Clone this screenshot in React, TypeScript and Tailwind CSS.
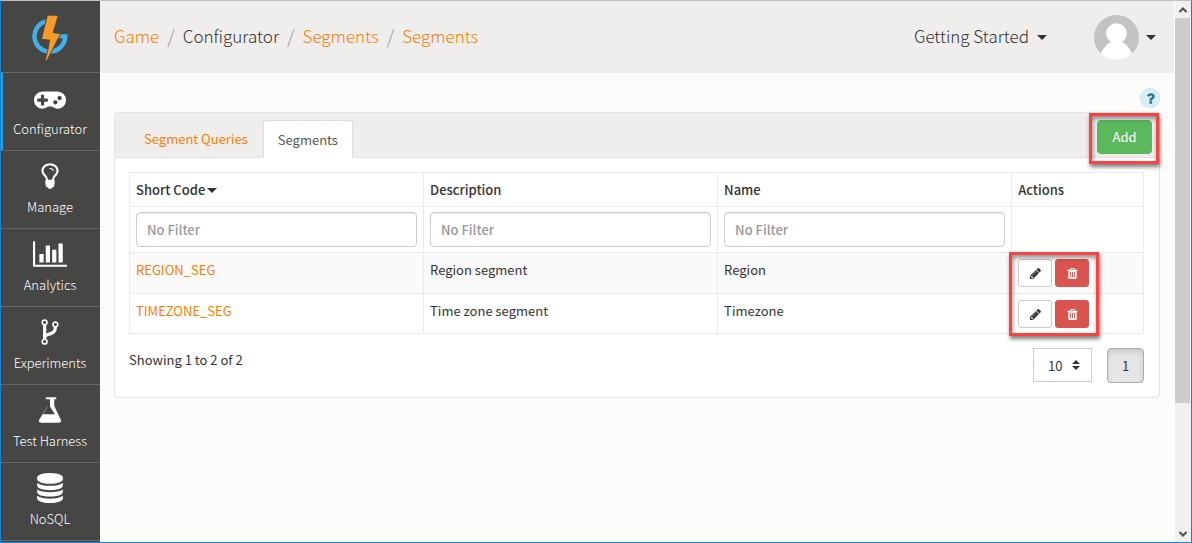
import React from "react";

type Glyph = { box: string; d: string };

const glyphs: Record<string, Glyph> = {
  gamepad: {
    box: "0 0 1920 1792",
    d: "M832 1088v-128q0-14-9-23t-23-9h-192v-192q0-14-9-23t-23-9h-128q-14 0-23 9t-9 23v192h-192q-14 0-23 9t-9 23v128q0 14 9 23t23 9h192v192q0 14 9 23t23 9h128q14 0 23-9t9-23v-192h192q14 0 23-9t9-23zm576 64q0-53-37.5-90.5t-90.5-37.5-90.5 37.5-37.5 90.5 37.5 90.5 90.5 37.5 90.5-37.5 37.5-90.5zm256-256q0-53-37.5-90.5t-90.5-37.5-90.5 37.5-37.5 90.5 37.5 90.5 90.5 37.5 90.5-37.5 37.5-90.5zm256 128q0 212-150 362t-362 150q-192 0-338-128h-220q-146 128-338 128-212 0-362-150t-150-362 150-362 362-150h896q212 0 362 150t150 362z",
  },
  bulb: {
    box: "0 0 1792 1792",
    d: "M1120 576q0 13-9.5 22.5t-22.5 9.5-22.5-9.5-9.5-22.5q0-46-54-71t-106-25q-13 0-22.5-9.5t-9.5-22.5 9.5-22.5 22.5-9.5q50 0 99.5 16t87 54 37.5 90zm160 0q0-72-34.5-134t-90-101.5-123-62-136.5-22.5-136.5 22.5-123 62-90 101.5-34.5 134q0 101 68 180 10 11 30.5 33t30.5 33q128 153 141 298h228q13-145 141-298 10-11 30.5-33t30.5-33q68-79 68-180zm128 0q0 155-103 268-45 49-74.5 87t-59.5 95.5-34 107.5q47 28 47 82 0 37-25 64 25 27 25 64 0 52-45 81 13 23 13 47 0 46-31.5 71t-77.5 25q-20 44-60 70t-87 26-87-26-60-70q-46 0-77.5-25t-31.5-71q0-24 13-47-45-29-45-81 0-37 25-64-25-27-25-64 0-54 47-82-4-50-34-107.5t-59.5-95.5-74.5-87q-103-113-103-268 0-99 44.5-184.5t117-142 164-89 186.5-32.5 186.5 32.5 164 89 117 142 44.5 184.5z",
  },
  chart: {
    box: "0 0 2048 1792",
    d: "M640 896v512h-256v-512h256zm384-512v1024h-256v-1024h256zm1024 1152v128h-2048v-1536h128v1408h1920zm-640-896v768h-256v-768h256zm384-384v1152h-256v-1152h256z",
  },
  fork: {
    box: "0 0 1792 1792",
    d: "M672 1472q0-40-28-68t-68-28-68 28-28 68 28 68 68 28 68-28 28-68zm0-1152q0-40-28-68t-68-28-68 28-28 68 28 68 68 28 68-28 28-68zm640 128q0-40-28-68t-68-28-68 28-28 68 28 68 68 28 68-28 28-68zm96 0q0 52-26 96.5t-70 69.5q-2 287-226 414-67 38-203 81-128 40-169.5 71t-41.5 100v26q44 25 70 69.5t26 96.5q0 80-56 136t-136 56-136-56-56-136q0-52 26-96.5t70-69.5v-820q-44-25-70-69.5t-26-96.5q0-80 56-136t136-56 136 56 56 136q0 52-26 96.5t-70 69.5v497q54-26 154-57 55-17 87.5-29.5t70.5-31 59-39.5 40.5-51 28-69.5 8.5-91.5q-44-25-70-69.5t-26-96.5q0-80 56-136t136-56 136 56 56 136z",
  },
  flask: {
    box: "0 0 1792 1792",
    d: "M1527 1448q56 89 21.5 152.5t-140.5 63.5h-1024q-106 0-140.5-63.5t21.5-152.5l503-793v-399h-64q-26 0-45-19t-19-45 19-45 45-19h512q26 0 45 19t19 45-19 45-45 19h-64v399zm-779-725l-272 429h712l-272-429-20-31v-436h-128v436z",
  },
  database: {
    box: "0 0 1792 1792",
    d: "M896 768q237 0 443-43t325-127v170q0 69-103 128t-280 93.5-385 34.5-385-34.5-280-93.5-103-128v-170q119 84 325 127t443 43zm0 768q237 0 443-43t325-127v170q0 69-103 128t-280 93.5-385 34.5-385-34.5-280-93.5-103-128v-170q119 84 325 127t443 43zm0-384q237 0 443-43t325-127v170q0 69-103 128t-280 93.5-385 34.5-385-34.5-280-93.5-103-128v-170q119 84 325 127t443 43zm0-1152q208 0 385 34.5t280 93.5 103 128v128q0 69-103 128t-280 93.5-385 34.5-385-34.5-280-93.5-103-128v-128q0-69 103-128t280-93.5 385-34.5z",
  },
  pencil: {
    box: "0 0 1792 1792",
    d: "M491 1536l91-91-235-235-91 91v107h128v128h107zm523-928q0-22-22-22-10 0-17 7l-542 542q-7 7-7 17 0 22 22 22 10 0 17-7l542-542q7-7 7-17zm-54-192l416 416-832 832h-416v-416zm683 96q0 53-37 90l-166 166-416-416 166-165q36-38 90-38 53 0 91 38l235 234q37 39 37 91z",
  },
  trash: {
    box: "0 0 1792 1792",
    d: "M704 1376v-704q0-14-9-23t-23-9h-64q-14 0-23 9t-9 23v704q0 14 9 23t23 9h64q14 0 23-9t9-23zm256 0v-704q0-14-9-23t-23-9h-64q-14 0-23 9t-9 23v704q0 14 9 23t23 9h64q14 0 23-9t9-23zm256 0v-704q0-14-9-23t-23-9h-64q-14 0-23 9t-9 23v704q0 14 9 23t23 9h64q14 0 23-9t9-23zm-544-992h448l-48-117q-7-9-17-11h-317q-10 2-17 11zm928 32v64q0 14-9 23t-23 9h-96v948q0 83-47 143.5t-113 60.5h-832q-66 0-113-58.5t-47-141.5v-952h-96q-14 0-23-9t-9-23v-64q0-14 9-23t23-9h309l70-167q15-37 54-63t79-26h320q40 0 79 26t54 63l70 167h309q14 0 23 9t9 23z",
  },
  question: {
    box: "0 0 1792 1792",
    d: "M1088 1256v240q0 16-12 28t-28 12h-240q-16 0-28-12t-12-28v-240q0-16 12-28t28-12h240q16 0 28 12t12 28zm316-600q0 54-15.5 101t-35 76.5-55 59.5-57.5 43.5-61 35.5q-41 23-68.5 65t-27.5 67q0 17-12 32.5t-28 15.5h-240q-15 0-25.5-18.5t-10.5-37.5v-45q0-83 65-156.5t143-108.5q59-27 84-56t25-76q0-42-46.5-74t-107.5-32q-65 0-108 29-35 25-107 115-13 16-31 16-12 0-25-8l-164-125q-13-10-15.5-25t5.5-28q160-266 464-266 80 0 161 31t146 83 106 127.5 41 158.5z",
  },
};

function Icon({ name, className }: { name: string; className: string }) {
  const g = glyphs[name];
  return (
    <svg viewBox={g.box} className={className} fill="currentColor" aria-hidden="true">
      <path d={g.d} />
    </svg>
  );
}

function Caret() {
  return (
    <svg viewBox="0 0 10 5" className="h-[5px] w-[10px]" fill="currentColor" aria-hidden="true">
      <path d="M0 0h10L5 5z" />
    </svg>
  );
}

function Logo() {
  return (
    <svg viewBox="21 21 111 138" className="h-[46px] w-[37px]" aria-hidden="true">
      <path d="M62 40.500A46 46 0 1 0 120.500 85" fill="none" stroke="#40b0e8" strokeWidth="13.500" />
      <path d="M107 79h20v12h-26z" fill="#40b0e8" />
      <path
        d="M68 23h30L83 75l22 3L65 157l-3-1 8-31 5-30-24-3z"
        fill="#f79a2c"
        stroke="#464644"
        strokeWidth="5"
        paintOrder="stroke"
      />
    </svg>
  );
}

const nav = [
  { label: "Configurator", icon: "gamepad", size: "h-[30px] w-8" },
  { label: "Manage", icon: "bulb", size: "size-[30px]" },
  { label: "Analytics", icon: "chart", size: "h-[30px] w-[34px]" },
  { label: "Experiments", icon: "fork", size: "size-[30px]" },
  { label: "Test Harness", icon: "flask", size: "size-[30px]" },
  { label: "NoSQL", icon: "database", size: "size-[30px]" },
];

const rows = [
  { code: "REGION_SEG", description: "Region segment", name: "Region" },
  { code: "TIMEZONE_SEG", description: "Time zone segment", name: "Timezone" },
];

const filters = ["Short Code", "Description", "Name"];

function Highlight({ className }: { className: string }) {
  return (
    <span
      aria-hidden="true"
      className={`pointer-events-none absolute z-10 border-3 border-[#fb4343] shadow-[1px_3px_4px_rgba(0,0,0,0.5),inset_1px_3px_4px_rgba(0,0,0,0.4)] ${className}`}
    />
  );
}

function Sidebar() {
  return (
    <nav className="flex w-[99px] shrink-0 flex-col overflow-hidden bg-[#464644]">
      <a href="#home" aria-label="Home" className="flex h-[71px] shrink-0 items-center justify-center pt-[3px]">
        <Logo />
      </a>
      {nav.map((item, i) => (
        <a
          key={item.label}
          href={"#" + item.label}
          className={`flex h-[78px] shrink-0 flex-col items-center gap-[5px] border-t border-[#666664] pt-[10px] text-white ${
            i === 0 ? "border-l-2 border-l-[#1fa4e8] pr-[3px]" : "pr-px"
          }`}
        >
          <Icon name={item.icon} className={item.size} />
          <span className="text-[13px] leading-[22px] font-light">{item.label}</span>
        </a>
      ))}
      <div className="h-[78px] shrink-0 border-t border-[#666664]" />
    </nav>
  );
}

function Slash() {
  return (
    <li aria-hidden="true" className="text-[19px] text-[#999]">
      /
    </li>
  );
}

function TopBar() {
  return (
    <header className="flex h-[72px] shrink-0 items-center justify-between bg-[#f0eeed] pr-[18px] pl-[14px] text-[17px] leading-6 font-light">
      <nav aria-label="Breadcrumb" className="pb-[2px]">
        <ol className="flex gap-2">
          <li><a href="#game" className="text-[#ff7c00]">Game</a></li>
          <Slash />
          <li>Configurator</li>
          <Slash />
          <li><a href="#segment" className="text-[#ff7c00]">Segments</a></li>
          <Slash />
          <li><a href="#segments" className="text-[#ff7c00]">Segments</a></li>
        </ol>
      </nav>
      <div className="flex items-center gap-[47px]">
        <button type="button" className="flex items-center gap-2">
          <span className="pb-[2px]">Getting Started</span>
          <Caret />
        </button>
        <button type="button" aria-label="Account" className="flex items-center gap-[7px]">
          <svg viewBox="0 0 45 45" className="size-[45px] rounded-full" aria-hidden="true">
            <path d="M0 0h45v45H0z" fill="#c3c3c3" />
            <circle cx="22.5" cy="18.500" r="10.3" fill="#fff" />
            <path d="M6 40Q12 27 19 26.500h7Q33 27 39 40L36 45H9z" fill="#fff" />
          </svg>
          <Caret />
        </button>
      </div>
    </header>
  );
}

function SegmentsTable() {
  const line = "border border-[#ebebeb] px-[6px] text-left align-top";
  const head = `${line} pt-[6px] pb-[5px] font-medium`;
  return (
    <table className="w-full table-fixed border-collapse">
      <colgroup>
        <col className="w-[29%]" />
        <col className="w-[29%]" />
        <col className="w-[29%]" />
        <col />
      </colgroup>
      <thead>
        <tr>
          <th scope="col" className={head}>
            <button type="button" className="flex items-center gap-[2px]">
              Short Code
              <Caret />
            </button>
          </th>
          <th scope="col" className={head}>Description</th>
          <th scope="col" className={head}>Name</th>
          <th scope="col" className={head}>Actions</th>
        </tr>
        <tr>
          {filters.map((f) => (
            <td key={f} className={`${line} py-[5px]`}>
              <input
                type="text"
                aria-label={"Filter by " + f}
                placeholder="No Filter"
                className="block h-[35px] w-full rounded-[4px] border border-[#ccc] bg-white px-[10px] font-medium shadow-[inset_0_1px_1px_rgba(0,0,0,0.075)] placeholder:text-[#999]"
              />
            </td>
          ))}
          <td className={line} />
        </tr>
      </thead>
      <tbody>
        {rows.map((r, i) => {
          const cell = `${line} pt-[6px] ${i === rows.length - 1 ? "pb-[5px]" : "pb-[6px]"}`;
          return (
            <tr key={r.code} className="odd:bg-[#fafafa]">
              <td className={cell}><a href={"#" + r.code} className="text-[#ff7c00]">{r.code}</a></td>
              <td className={cell}>{r.description}</td>
              <td className={cell}>{r.name}</td>
              <td className={cell}>
                <div className="relative flex gap-[3px]">
                  <button type="button" aria-label={"Edit " + r.code} className="flex h-7 w-[34px] items-center justify-center rounded-[3px] border border-[#ccc] bg-white">
                    <Icon name="pencil" className="size-[13px]" />
                  </button>
                  <button type="button" aria-label={"Delete " + r.code} className="flex h-7 w-[34px] items-center justify-center rounded-[3px] border border-[#d9534f] bg-[#d9534f] text-white">
                    <Icon name="trash" className="size-[13px]" />
                  </button>
                  {i === 0 && <Highlight className="-top-[7px] -left-[9px] h-[84px] w-[90px]" />}
                </div>
              </td>
            </tr>
          );
        })}
      </tbody>
    </table>
  );
}

function Panel() {
  return (
    <section className="rounded-[4px] border border-[#e4e4e2] bg-white">
      <div className="flex h-[45px] items-start justify-between border-b border-[#e0e0de] bg-[#f0eeed] pt-[7px] pr-[7px] pl-[14px]">
        <div role="tablist" className="flex">
          <button type="button" role="tab" aria-selected="false" className="h-[38px] px-[15px] text-[#ff7c00]">
            Segment Queries
          </button>
          <button type="button" role="tab" aria-selected="true" className="h-[38px] rounded-t-[4px] border border-b-0 border-[#ddd] bg-white px-[14px] text-[#555]">
            Segments
          </button>
        </div>
        <div className="relative">
          <button type="button" className="block h-[34px] w-[55px] rounded-[4px] border border-[#5cb85c] bg-[#5cb85c] text-white">
            Add
          </button>
          <Highlight className="-top-[7px] -right-[7px] -bottom-[10px] -left-2" />
        </div>
      </div>
      <div className="p-[14px] pr-[15px]">
        <SegmentsTable />
        <div className="flex items-start justify-between pt-[14px]">
          <p className="leading-6">Showing 1 to 2 of 2</p>
          <div className="flex gap-[15px]">
            <div className="relative">
              <select aria-label="Rows per page" className="h-[34px] w-[59px] appearance-none border border-[#ccc] bg-white pt-[2px] pl-[14px]">
                <option>10</option>
              </select>
              <svg viewBox="0 0 8 10" className="pointer-events-none absolute top-3 right-3 h-[10px] w-2" fill="currentColor" aria-hidden="true">
                <path d="M4 0l4 4H0zM0 6h8L4 10z" />
              </svg>
            </div>
            <button type="button" aria-current="page" className="h-[35px] w-[37px] rounded-[4px] border border-[#adadad] bg-[#e6e6e6] shadow-[inset_0_3px_5px_rgba(0,0,0,0.125)]">
              1
            </button>
          </div>
        </div>
      </div>
    </section>
  );
}

function ScrollBar() {
  return (
    <div aria-hidden="true" className="flex w-[17px] shrink-0 flex-col border-l border-white bg-[#f0f0f0] text-[#505050]">
      <div className="flex h-[17px] shrink-0 items-center justify-center">
        <svg viewBox="0 0 8 6" className="h-[6px] w-2" fill="none" stroke="currentColor" strokeWidth="2"><path d="M.5 5L4 1.500 7.500 5" /></svg>
      </div>
      <div className="flex-1 pr-px">
        <div className="h-[76%] bg-[#cdcdcd]" />
      </div>
      <div className="flex h-[17px] shrink-0 items-center justify-center">
        <svg viewBox="0 0 8 6" className="h-[6px] w-2" fill="none" stroke="currentColor" strokeWidth="2"><path d="M.5 1L4 4.500 7.500 1" /></svg>
      </div>
    </div>
  );
}

export default function App() {
  return (
    <div className="flex h-screen overflow-hidden border border-[#1883d7] border-t-[#bfbfbf] bg-[#fcfcfa] font-['Noto_Sans_CJK_SC','Noto_Sans',sans-serif] text-[13px] leading-[22px] text-[#333]">
      <Sidebar />
      <div className="flex min-w-0 flex-1 flex-col">
        <TopBar />
        <main className="flex flex-col px-[14px] pt-[15px]">
          <button type="button" aria-label="Help" className="mb-1 flex size-5 items-center justify-center self-end rounded-full border border-[#bce8f1] bg-[#d9edf7] text-[#31708f]">
            <Icon name="question" className="size-[15px] shrink-0" />
          </button>
          <Panel />
        </main>
      </div>
      <ScrollBar />
    </div>
  );
}
